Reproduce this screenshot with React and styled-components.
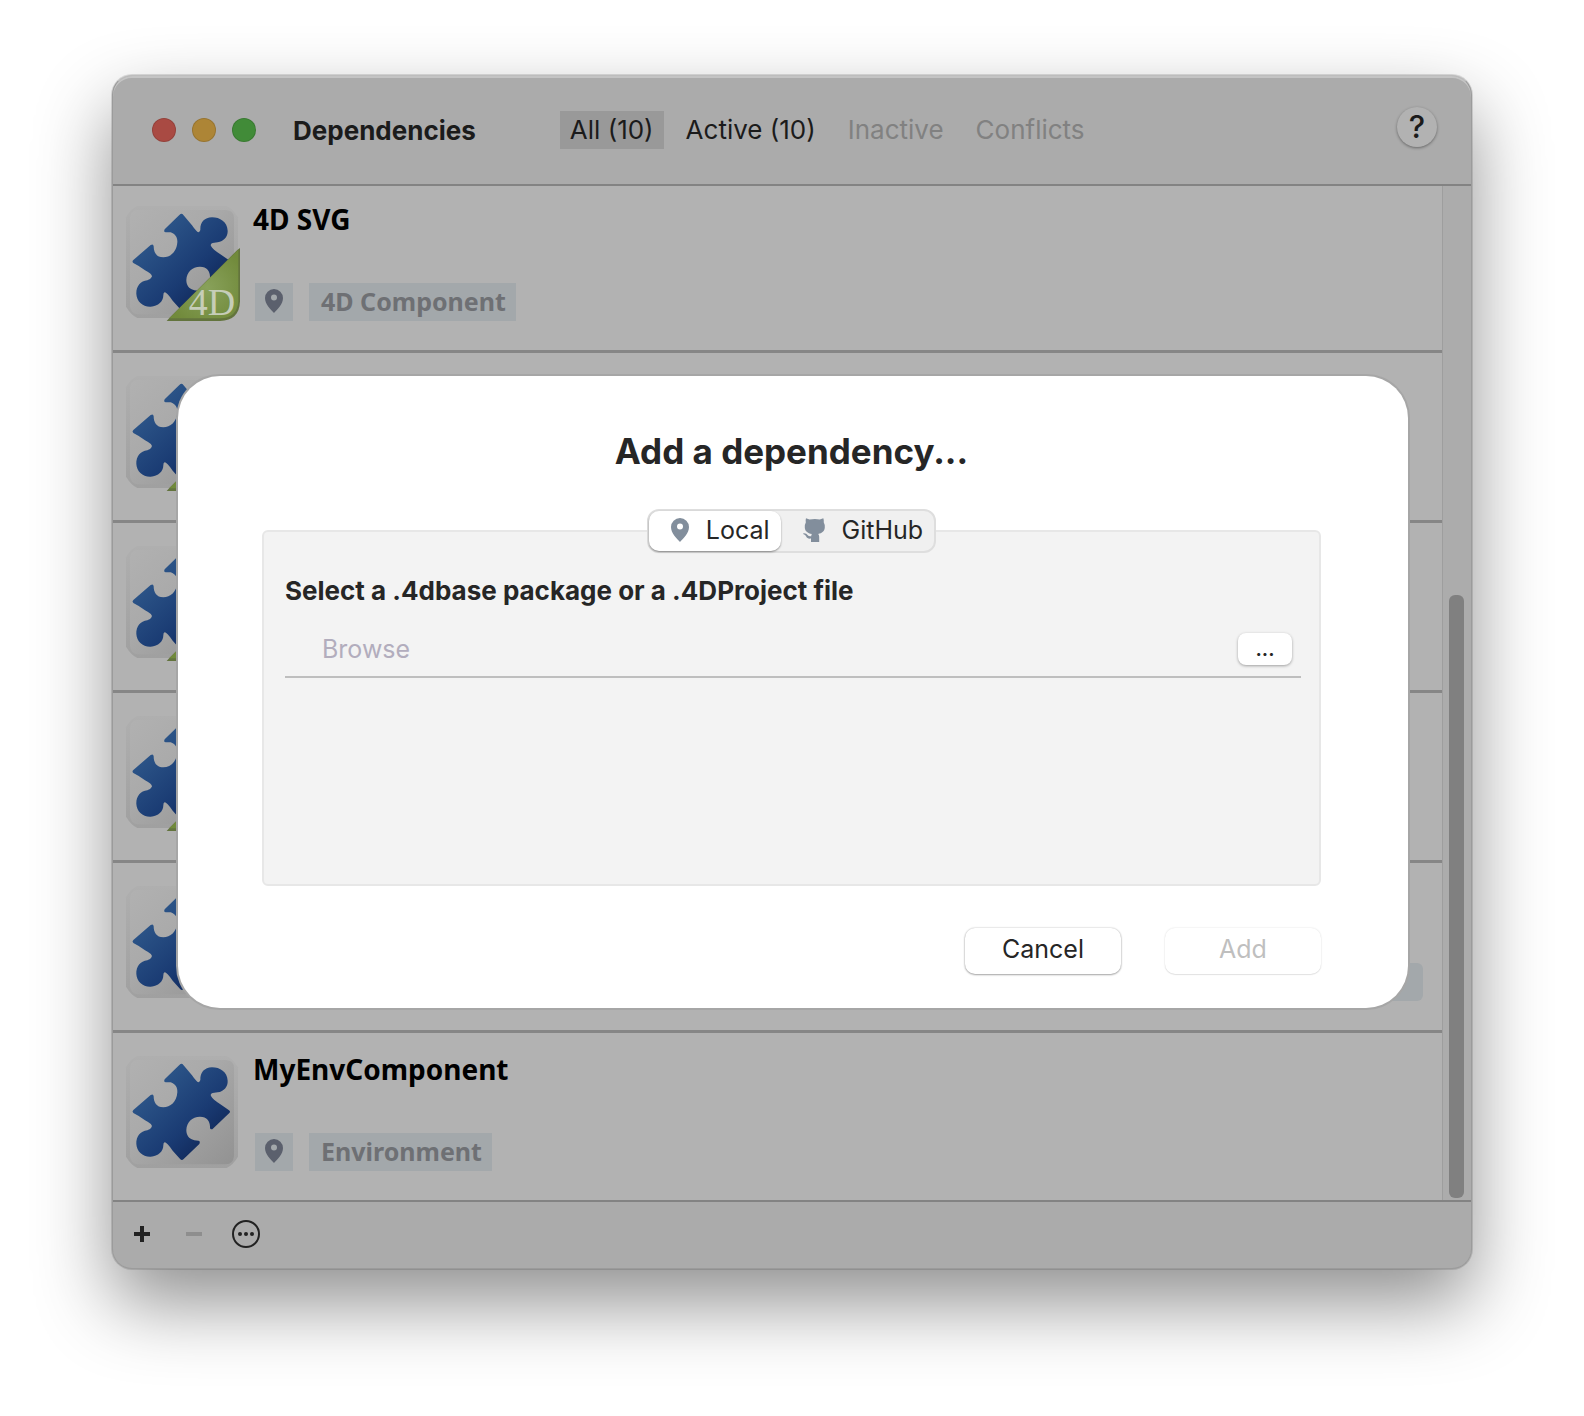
import React, { useState } from 'react';
import styled, { createGlobalStyle, css } from 'styled-components';

const GlobalStyle = createGlobalStyle`
  *,
  *::before,
  *::after {
    box-sizing: border-box;
  }

  body {
    margin: 0;
    background: #fff;
    color: #262626;
    font-family: Inter, 'Liberation Sans', sans-serif;
    font-size: 26px;
    line-height: 32px;
  }

  button,
  input {
    margin: 0;
    padding: 0;
    border: 0;
    background: none;
    color: inherit;
    font: inherit;
  }
`;

// window
const Page = styled.main`
  min-height: 100vh;
  padding: 75px 112px 147px;
  overflow: hidden;
`;

const Window = styled.section`
  position: relative;
  border: 1px solid #9b9b9b;
  border-top-color: #bdbdbd;
  border-radius: 20px;
  background: #ababab;
  box-shadow: 0 0 0 1px rgba(0, 0, 0, 0.12), 0 34px 76px rgba(0, 0, 0, 0.44),
    inset 0 2px 0 #c4c4c4;
`;

const TitleBar = styled.header`
  display: flex;
  align-items: center;
  height: 110px;
  padding: 0 34px 0 39px;
  border-bottom: 2px solid #838383;

  h1 {
    margin: 2px 84px 0 37px;
    color: #1b1b1b;
    font-size: 26px;
    font-weight: 700;
  }
`;

const Lights = styled.div`
  display: flex;
  gap: 16px;
`;

const Light = styled.button`
  width: 24px;
  height: 24px;
  border: 1px solid rgba(0, 0, 0, 0.12);
  border-radius: 50%;
  background: ${({ $color }) => $color};
`;

const Filters = styled.nav`
  display: flex;
  gap: 12px;
  margin-right: auto;
`;

const Filter = styled.button`
  height: 38px;
  padding: 0 10px;
  background: ${({ $active }) => ($active ? '#999' : 'transparent')};
  color: #1b1b1b;
  font-size: 26px;
  white-space: nowrap;

  &:disabled {
    color: #818181;
  }
`;

const Help = styled.button`
  width: 40px;
  height: 40px;
  margin-bottom: 6px;
  border-radius: 50%;
  background: #b2b2b2;
  box-shadow: 0 1px 3px rgba(0, 0, 0, 0.4);
  color: #1b1b1b;
  font-size: 31px;
  font-weight: 500;
`;

// list
const Body = styled.div`
  display: flex;
  background: #b2b2b2;
`;

const List = styled.ul`
  flex: 1;
  margin: 0;
  padding: 0;
  list-style: none;
`;

const Row = styled.li`
  display: flex;
  gap: 15px;
  height: 170px;
  padding: 23px 19px 0 13px;
  border-bottom: 3px solid #868686;

  &:first-child {
    height: 167px;
    padding-top: 20px;
  }

  &:last-child {
    height: 167px;
    border-bottom: 0;
  }
`;

const RowText = styled.div`
  flex: 1;
  display: flex;
  flex-direction: column;
  justify-content: space-between;
  height: 115px;
  font-family: 'Noto Sans', 'Open Sans', sans-serif;
  font-weight: 700;

  h2 {
    margin: 0;
    min-height: 28px;
    color: #000;
    font-size: 28px;
    line-height: 26px;
  }
`;

const Tags = styled.div`
  display: flex;
  gap: 16px;
  padding-left: 2px;
`;

const Tag = styled.span`
  display: flex;
  align-items: center;
  justify-content: center;
  min-width: 38px;
  height: 38px;
  padding: 0 ${({ $text }) => ($text ? '10px 2px 12px' : '0 2px')};
  background: #a3a8ab;
  color: #6e7074;
  font-size: 25px;

  ${({ $trailing }) =>
    $trailing &&
    css`
      width: 140px;
      margin-left: auto;
      border-radius: 6px;
    `}
`;

const ScrollTrack = styled.div`
  display: flex;
  align-items: flex-end;
  justify-content: center;
  width: 29px;
  padding: 0 1px 2px 0;
  border-left: 1px solid #9e9e9e;
  background: #acacac;

  &::after {
    content: '';
    width: 15px;
    height: calc(60% - 4px);
    border-radius: 6px;
    background: #808080;
  }
`;

const Footer = styled.footer`
  display: flex;
  align-items: center;
  gap: 24px;
  height: 68px;
  padding: 0 15px 2px;
  border-top: 2px solid #838383;
`;

const FooterButton = styled.button`
  display: grid;
  place-items: center;
  width: 28px;
  height: 28px;
  color: #222;

  &:disabled {
    color: #8e8e8e;
  }
`;

// dialog
const Overlay = styled.div`
  position: absolute;
  inset: 0;
  padding: 300px 63px 0 65px;
`;

const Modal = styled.form`
  display: flex;
  flex-direction: column;
  padding: 55px 87px 34px 84px;
  border-radius: 42px;
  background: #fff;
  box-shadow: 0 0 0 2px #a6a6a6;

  h2 {
    margin: 0 0 38px;
    font-size: 35px;
    font-weight: 700;
    line-height: 40px;
    text-align: center;
  }
`;

const Segments = styled.div`
  position: relative;
  z-index: 1;
  display: flex;
  align-self: center;
  margin-bottom: -23px;
  border: 2px solid #dedede;
  border-radius: 12px;
  background: #f0f0f0;
`;

const Segment = styled.button`
  display: flex;
  align-items: center;
  gap: 17px;
  height: 40px;
  padding: 0 11px 2px 22px;
  border-radius: 10px;
  font-size: 25px;

  ${({ $active }) =>
    $active &&
    css`
      background: #fff;
      box-shadow: 0 1px 2px rgba(0, 0, 0, 0.4);
    `}
`;

const Panel = styled.div`
  display: flex;
  flex-direction: column;
  height: 356px;
  padding: 43px 18px 0 21px;
  border: 2px solid #e7e7e7;
  border-radius: 6px;
  background: #f3f3f3;

  label {
    font-size: 26px;
    font-weight: 700;
  }
`;

const PathField = styled.div`
  display: flex;
  align-items: center;
  height: 54px;
  margin-top: 17px;
  padding: 0 9px 2px 37px;
  border-bottom: 2px solid #bebebe;

  input {
    flex: 1;
    min-width: 0;
    font-size: 25px;
    outline: none;
  }

  input::placeholder {
    color: #b2adbd;
    opacity: 1;
  }
`;

const BrowseButton = styled.button`
  width: 54px;
  height: 32px;
  border-radius: 8px;
  background: #fff;
  box-shadow: 0 1px 3px rgba(0, 0, 0, 0.35);
  font-size: 20px;
  font-weight: 600;
`;

const Actions = styled.div`
  display: flex;
  justify-content: flex-end;
  gap: 44px;
  margin-top: 42px;
`;

const ActionButton = styled.button`
  width: 156px;
  height: 46px;
  padding-bottom: 4px;
  border-radius: 10px;
  background: #fff;
  box-shadow: 0 0 2px rgba(0, 0, 0, 0.25), 0 1px 2px rgba(0, 0, 0, 0.3);
  font-size: 25px;

  &:disabled {
    box-shadow: 0 0 2px rgba(0, 0, 0, 0.14), 0 1px 1px rgba(0, 0, 0, 0.08);
    color: #bfbfbf;
  }
`;

// icons
const PinIcon = ({ color = '#828e9c' }) => (
  <svg width="18" height="24" viewBox="0 0 18 24" aria-hidden="true">
    <path
      fill={color}
      fillRule="evenodd"
      d="M9 0a9 9 0 0 0-9 9c0 6 5.600 11.600 9 15 3.400-3.400 9-9 9-15a9 9 0 0 0-9-9zm0 5.600a3 3 0 1 1 0 6 3 3 0 0 1 0-6z"
    />
  </svg>
);

const CatIcon = () => (
  <svg width="22" height="24" viewBox="0 0 22 24" aria-hidden="true">
    <path
      fill="#828e9c"
      d="M3 0.300L6.500 1.500Q12 0.500 16.800 1.500L20.300 0.200Q21.200 2.500 20.800 4.500Q22 6.500 21.800 9.500C21.600 13 19 15.300 15.200 15.900Q16.200 17 16.200 19V24H8V20.500C5.500 21 4 20.200 3.200 18.500Q2.500 16.800 0.200 16L0.400 15.300Q3.400 15 4.800 17.200Q5.800 18.700 8.200 18.200Q8.200 16.800 8.900 16C4.600 15.300 1.900 13 1.800 9.500Q1.600 6.500 2.800 4.500Q2.300 2.500 3 0.300z"
    />
  </svg>
);

const PUZZLE =
  'M160 27L116 70Q112 78 119 79L134 79C149 84 155 96 154 109C152 138 133 154 112 154C91 154 83 139 83 121Q82 112 74 117L22 162Q17 167 22 171Q42 181 57 193Q82 206 77 213Q73 221 64 223C43 225 30 242 31 264C32 286 50 303 74 302C97 301 112 286 112 268Q112 258 117 259Q123 260 140 284L163 310Q168 314 173 309L220 264Q224 255 217 254Q203 254 197 250C186 245 181 234 181 222C182 199 198 182 222 182C243 182 252 196 252 212Q251 221 259 220L310 171Q315 167 308 162L282 144Q260 130 255 120Q252 114 260 111L275 109C294 106 306 92 305 74C304 48 282 34 258 34C235 35 222 49 223 72Q221 80 215 78Q209 74 198 58L172 27Q167 20 160 27z';

const PuzzleIcon = ({ badge, id }) => (
  <svg
    width="112"
    height="112"
    viewBox="0 0 336 336"
    overflow="visible"
    aria-hidden="true"
  >
    <defs>
      <linearGradient id={`tile-${id}`} x1="0" y1="0" x2="1" y2="1">
        <stop offset="0" stopColor="#b1b1b1" />
        <stop offset="0.4" stopColor="#aaa" />
        <stop offset="1" stopColor="#929292" />
      </linearGradient>
      <linearGradient id={`edge-${id}`} x1="0" y1="0" x2="0" y2="1">
        <stop offset="0" stopColor="#afafaf" />
        <stop offset="1" stopColor="#a0a0a0" />
      </linearGradient>
      <linearGradient id={`blue-${id}`} x1="0" y1="0" x2="1" y2="1">
        <stop offset="0.2" stopColor="#2d5689" />
        <stop offset="0.6" stopColor="#1a3b73" />
        <stop offset="0.85" stopColor="#102758" />
      </linearGradient>
      <radialGradient id={`green-${id}`} cx="0.55" cy="0.55" r="0.6">
        <stop offset="0" stopColor="#88a15a" />
        <stop offset="1" stopColor="#718a3b" />
      </radialGradient>
    </defs>
    <path
      fill={`url(#edge-${id})`}
      d="M34 0H302Q318 6 336 34V302Q322 326 302 336H34Q16 328 0 302V34Q14 8 34 0z"
    />
    <path
      fill={`url(#tile-${id})`}
      d="M34 12H300Q324 14 324 36V300Q322 324 300 325H34Q14 322 12 300V34Q14 14 34 12z"
    />
    <path fill={`url(#blue-${id})`} d={PUZZLE} />
    {badge && (
      <>
        <path
          fill="#63743d"
          d="M342 126V286Q340 344 282 345H122L130 336L334 132z"
        />
        <path
          fill={`url(#green-${id})`}
          d="M337 131V284Q334 336 282 337H130z"
        />
        <text
          x="188"
          y="326"
          fill="#c6cdb8"
          fontFamily="'Liberation Serif', serif"
          fontSize="114"
        >
          4D
        </text>
      </>
    )}
  </svg>
);

const PlusIcon = () => (
  <svg width="16" height="16" viewBox="0 0 16 16" aria-hidden="true">
    <path fill="currentColor" d="M6 0h4v6h6v4h-6v6H6v-6H0V6h6z" />
  </svg>
);

const MinusIcon = () => (
  <svg width="16" height="16" viewBox="0 0 16 16" aria-hidden="true">
    <path fill="currentColor" d="M0 6h16v4H0z" />
  </svg>
);

const MoreIcon = () => (
  <svg width="28" height="28" viewBox="0 0 28 28" aria-hidden="true">
    <circle
      cx="14"
      cy="14"
      r="13"
      fill="none"
      stroke="currentColor"
      strokeWidth="2"
    />
    <circle cx="8" cy="14" r="2" fill="currentColor" />
    <circle cx="14" cy="14" r="2" fill="currentColor" />
    <circle cx="20" cy="14" r="2" fill="currentColor" />
  </svg>
);

const lights = [
  { label: 'Close', color: '#a94a43' },
  { label: 'Minimize', color: '#ad8536' },
  { label: 'Zoom', color: '#418b38' },
];

const filters = [
  { label: 'All (10)', active: true },
  { label: 'Active (10)' },
  { label: 'Inactive', disabled: true },
  { label: 'Conflicts', disabled: true },
];

const rows = [
  { id: 1, name: '4D SVG', tag: '4D Component', badge: true },
  { id: 2, badge: true },
  { id: 3, badge: true },
  { id: 4, badge: true },
  { id: 5, trailing: true },
  { id: 6, name: 'MyEnvComponent', tag: 'Environment' },
];

const Dependency = ({ id, name, tag, badge, trailing }) => (
  <Row>
    <PuzzleIcon badge={badge} id={id} />
    <RowText>
      {name ? <h2>{name}</h2> : <span />}
      <Tags>
        {tag && (
          <>
            <Tag>
              <PinIcon color="#5b606d" />
            </Tag>
            <Tag $text>{tag}</Tag>
          </>
        )}
        {trailing && <Tag $trailing />}
      </Tags>
    </RowText>
  </Row>
);

const AddDialog = () => {
  const [source, setSource] = useState('local');
  const [path, setPath] = useState('');

  return (
    <Overlay>
      <Modal
        role="dialog"
        aria-labelledby="dialog-title"
        onSubmit={e => e.preventDefault()}
      >
        <h2 id="dialog-title">Add a dependency...</h2>
        <Segments>
          <Segment
            type="button"
            $active={source === 'local'}
            onClick={() => setSource('local')}
          >
            <PinIcon />
            Local
          </Segment>
          <Segment
            type="button"
            $active={source === 'github'}
            onClick={() => setSource('github')}
          >
            <CatIcon />
            GitHub
          </Segment>
        </Segments>
        <Panel>
          <label htmlFor="package-path">
            Select a .4dbase package or a .4DProject file
          </label>
          <PathField>
            <input
              id="package-path"
              type="text"
              placeholder="Browse"
              value={path}
              onChange={e => setPath(e.target.value)}
            />
            <BrowseButton type="button">...</BrowseButton>
          </PathField>
        </Panel>
        <Actions>
          <ActionButton type="button">Cancel</ActionButton>
          <ActionButton type="submit" disabled={!path}>
            Add
          </ActionButton>
        </Actions>
      </Modal>
    </Overlay>
  );
};

const App = () => (
  <>
    <GlobalStyle />
    <Page>
      <Window>
        <TitleBar>
          <Lights>
            {lights.map(({ label, color }) => (
              <Light key={label} type="button" aria-label={label} $color={color} />
            ))}
          </Lights>
          <h1>Dependencies</h1>
          <Filters>
            {filters.map(({ label, active, disabled }) => (
              <Filter
                key={label}
                type="button"
                $active={active}
                disabled={disabled}
              >
                {label}
              </Filter>
            ))}
          </Filters>
          <Help type="button">?</Help>
        </TitleBar>
        <Body>
          <List>
            {rows.map(row => (
              <Dependency key={row.id} {...row} />
            ))}
          </List>
          <ScrollTrack />
        </Body>
        <Footer>
          <FooterButton type="button" aria-label="Add">
            <PlusIcon />
          </FooterButton>
          <FooterButton type="button" aria-label="Remove" disabled>
            <MinusIcon />
          </FooterButton>
          <FooterButton type="button" aria-label="More">
            <MoreIcon />
          </FooterButton>
        </Footer>
        <AddDialog />
      </Window>
    </Page>
  </>
);

export default App;
